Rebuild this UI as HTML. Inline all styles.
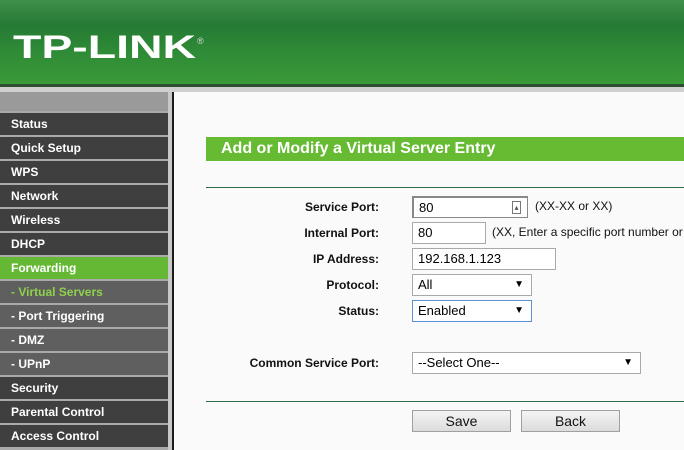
<!DOCTYPE html>
<html><head><style>
*{margin:0;padding:0;box-sizing:border-box}
body{width:684px;height:450px;overflow:hidden;background:#fafafa;font-family:"Liberation Sans",Arial,sans-serif;position:relative}
.hdr{position:absolute;left:0;top:0;width:684px;height:84px;background:linear-gradient(#3f8f4a 0,#257a34 30%,#2e8a36 60%,#3a9a38 100%)}
.logo{position:absolute;left:13px;top:31px;color:#fff;font-weight:bold;font-size:32px;line-height:32px;transform:scaleX(1.45);transform-origin:left;font-family:"Liberation Sans",sans-serif;white-space:nowrap}
.reg{position:absolute;left:197px;top:36px;color:#ddd;font-size:9px}
.dl{position:absolute;left:0;top:84px;width:684px;height:3px;background:#2f4f35}
.gl{position:absolute;left:0;top:87px;width:684px;height:5px;background:#cfcfcf}
.side{position:absolute;left:0;top:92px;width:168px;height:358px;background:#a9a9a9}
.topbar{height:19px;background:#9a9a9a}
.it{height:22px;margin-top:2px;background:#3f3f3f;color:#fff;font-weight:bold;font-size:12px;line-height:22px;padding-left:11px}
.it.sub{background:#5f5f5f}
.it.fw{background:#65b834}
.it.act{color:#8fd14d}
.vb{position:absolute;left:168px;top:92px;width:4px;height:358px;background:#c8c8c8}
.vb2{position:absolute;left:172px;top:92px;width:2px;height:358px;background:#1a1a1a}
.title{position:absolute;left:206px;top:137px;width:478px;height:24px;background:#66bb33;color:#fff;font-weight:bold;font-size:16px;line-height:24px;padding-left:15px}
.hr{position:absolute;left:206px;width:478px;height:1px;background:#2f6e44}
.lb{position:absolute;width:200px;left:179px;text-align:right;font-size:12px;font-weight:bold;color:#111}
.in{position:absolute;left:412px;height:22px;border:1px solid #a9a9a9;background:#fff;font-size:13px;line-height:20px;padding-left:5px;color:#000}
.note{position:absolute;font-size:12px;color:#111}
.arr{position:absolute;right:7px;top:0;font-size:10px}
.btn{position:absolute;top:410px;height:22px;width:99px;border:1px solid #a0a0a0;background:linear-gradient(#f4f4f4,#dcdcdc);font-size:14px;text-align:center;line-height:20px;color:#111}
</style></head><body>
<div class="hdr"><div class="logo">TP-LINK</div><div class="reg">®</div></div>
<div class="dl"></div><div class="gl"></div>
<div class="side"><div class="topbar"></div>
<div class="it">Status</div><div class="it">Quick Setup</div><div class="it">WPS</div><div class="it">Network</div><div class="it">Wireless</div><div class="it">DHCP</div><div class="it fw">Forwarding</div><div class="it sub act">- Virtual Servers</div><div class="it sub">- Port Triggering</div><div class="it sub">- DMZ</div><div class="it sub">- UPnP</div><div class="it">Security</div><div class="it">Parental Control</div><div class="it">Access Control</div>
</div>
<div class="vb"></div><div class="vb2"></div>
<div class="title">Add or Modify a Virtual Server Entry</div>
<div class="hr" style="top:187px"></div>
<div class="lb" style="top:200px">Service Port:</div>
<div class="in" style="top:196px;width:116px;border-color:#888;border-width:2px 1px 1px 2px">80<span style="position:absolute;right:6px;top:3px;width:9px;height:13px;border:1px solid #777;font-size:8px;line-height:11px;text-align:center;color:#555">▴</span></div>
<div class="note" style="left:535px;top:199px">(XX-XX or XX)</div>
<div class="lb" style="top:226px">Internal Port:</div>
<div class="in" style="top:222px;width:74px">80</div>
<div class="note" style="left:492px;top:225px;white-space:nowrap">(XX, Enter a specific port number or</div>
<div class="lb" style="top:252px">IP Address:</div>
<div class="in" style="top:248px;width:144px">192.168.1.123</div>
<div class="lb" style="top:278px">Protocol:</div>
<div class="in" style="top:274px;width:120px">All<span class="arr">▼</span></div>
<div class="lb" style="top:304px">Status:</div>
<div class="in" style="top:300px;width:120px;border-color:#5b8fd6">Enabled<span class="arr">▼</span></div>
<div class="lb" style="top:356px">Common Service Port:</div>
<div class="in" style="top:352px;width:229px">--Select One--<span class="arr">▼</span></div>
<div class="hr" style="top:401px"></div>
<div class="btn" style="left:412px">Save</div>
<div class="btn" style="left:521px">Back</div>
</body></html>
